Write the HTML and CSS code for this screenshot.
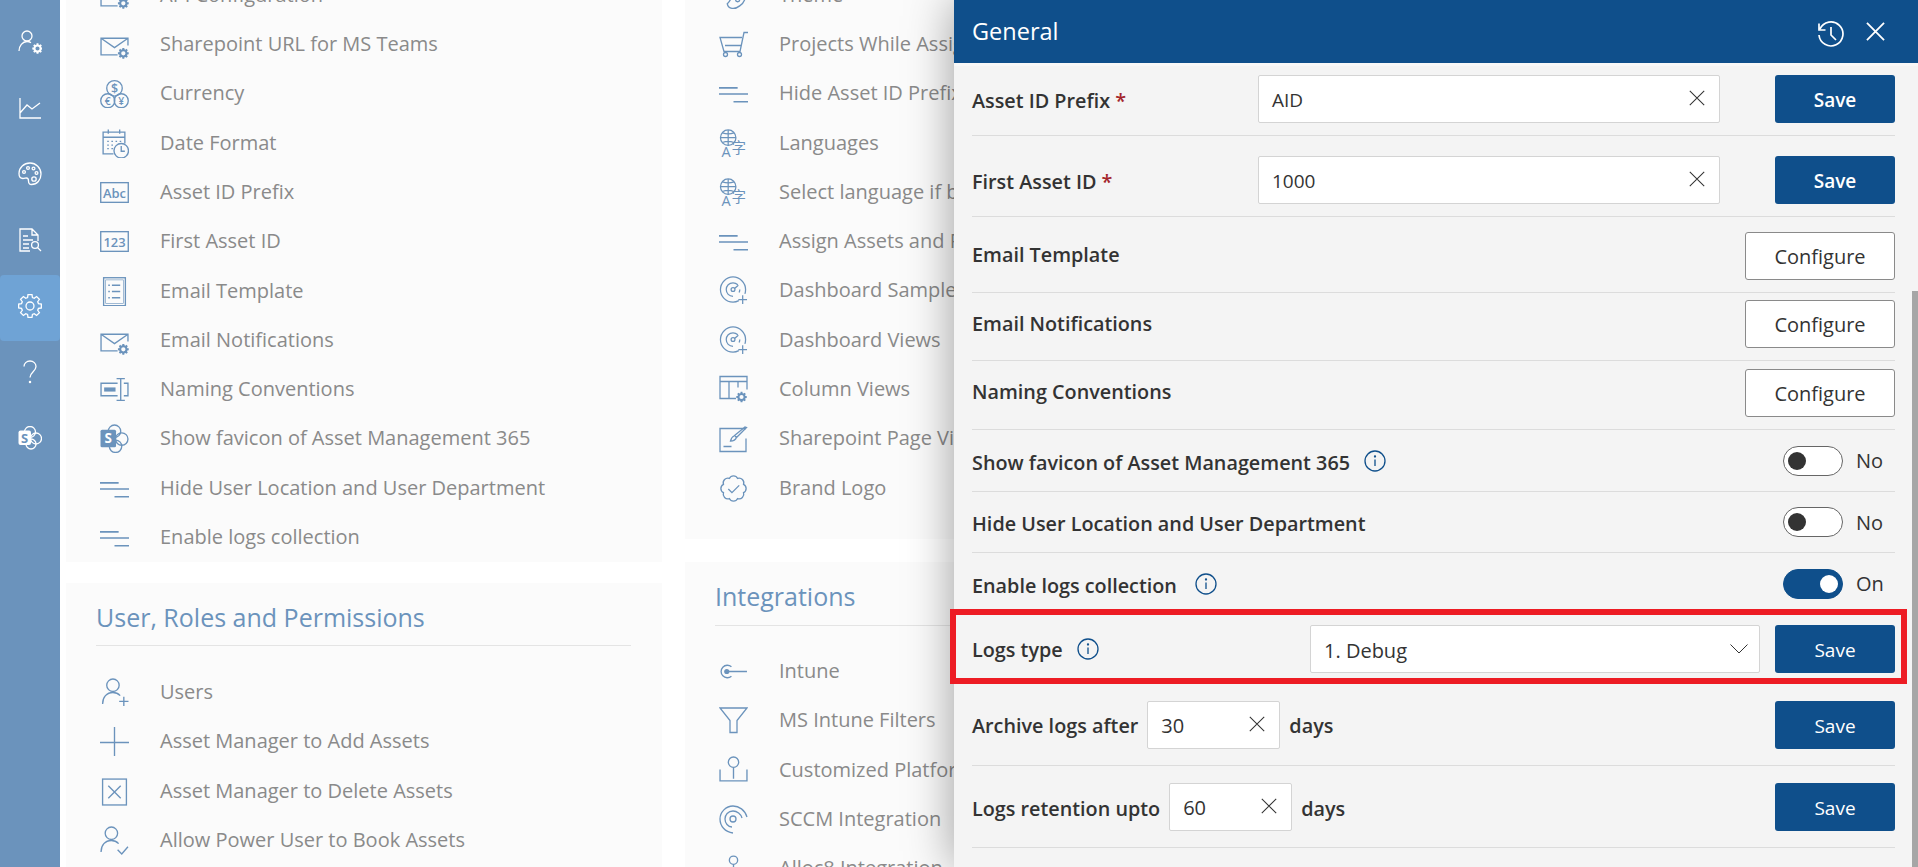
FILE: index.html
```html
<!DOCTYPE html>
<html lang="en">
<head>
<meta charset="utf-8">
<title>General settings</title>
<link rel="stylesheet" href="styles.css">
</head>
<body>
<svg class="defs" width="0" height="0" aria-hidden="true">
  <defs>
    <path id="gp" d="M23.33 14l-2.87.43-.76 1.84 1.72 2.33-2.82 2.82-2.33-1.72-1.84.76-.43 2.87h-4l-.43-2.87-1.84-.76-2.33 1.72-2.82-2.82 1.72-2.33-.76-1.84L.67 14v-4l2.87-.43.76-1.84L2.58 5.4 5.4 2.58 7.73 4.3l1.84-.76L10 .67h4l.43 2.87 1.84.76 2.33-1.72 2.82 2.82-1.72 2.33.76 1.84 2.87.43z"/>
    <path id="sgear" fill="currentColor" stroke="none" fill-rule="evenodd" transform="scale(.46)" d="M23.33 14l-2.87.43-.76 1.84 1.72 2.33-2.82 2.82-2.33-1.72-1.84.76-.43 2.87h-4l-.43-2.87-1.84-.76-2.33 1.72-2.82-2.82 1.72-2.33-.76-1.84L.67 14v-4l2.87-.43.76-1.84L2.58 5.4 5.4 2.58 7.73 4.3l1.84-.76L10 .67h4l.43 2.87 1.84.76 2.33-1.72 2.82 2.82-1.72 2.33.76 1.84 2.87.43zM12 7.500a4.500 4.500 0 1 0 0 9 4.500 4.500 0 0 0 0-9z"/>
    <symbol id="i-usergear" viewBox="0 0 24 24"><circle cx="9" cy="6" r="5"/><path d="M1 21c0-5 3.500-9.500 8-9.500 1.500 0 3 .5 4 1.200"/><use href="#sgear" x="14" y="13"/></symbol>
    <symbol id="i-chart" viewBox="0 0 24 24"><path d="M2 2v20h21M2 17l7-8 5 4 8-6"/></symbol>
    <symbol id="i-palette" viewBox="0 0 24 24"><path d="M12 1C6 1 1 5.500 1 11.500c0 3 1.500 5 4 5 1.500 0 2.500-.5 3.500-.5 2 0 2 1.500 2 3 0 2 1 3.500 3 3.500 5.500 0 9.500-4.500 9.500-10.500C23 6 18 1 12 1z"/><circle cx="6" cy="10" r="1.400"/><circle cx="10" cy="6" r="1.400"/><circle cx="15.500" cy="6.500" r="1.400"/><circle cx="18.500" cy="11" r="1.400"/><circle cx="16" cy="17" r="2.200"/></symbol>
    <symbol id="i-report" viewBox="0 0 24 24"><path d="M12 23H2V1h12l6 6v6M14 1v6h6M5 8h5M5 12h10M5 16h6M5 20h6"/><circle cx="17" cy="17" r="3.400"/><path d="M19.500 19.500L23 23"/></symbol>
    <symbol id="i-gear" viewBox="0 0 24 24"><use href="#gp"/><circle cx="12" cy="12" r="4"/></symbol>
    <symbol id="i-help" viewBox="0 0 24 24"><path d="M6 6.500C6 3.500 8.500 1 12 1s6 2.500 6 5.500c0 5-6 5.500-6 11"/><circle cx="12" cy="22" r=".6"/></symbol>
    <symbol id="i-share" viewBox="0 0 24 24"><circle cx="12" cy="6" r="5.500"/><circle cx="18" cy="12.500" r="5.500"/><circle cx="13" cy="18" r="5"/><rect class="solid" x="0.500" y="4.500" width="12.500" height="14.500" rx="2"/><text class="sletter" x="6.700" y="16.500">S</text></symbol>
    <symbol id="i-rectgear" viewBox="0 0 28 28"><path d="M17 24H1V8h26v7"/><use href="#sgear" x="17" y="16"/></symbol>
    <symbol id="i-mailgear" viewBox="0 0 28 28"><path d="M17 24H1V8h26v7M1 8l13 9 13-9"/><use href="#sgear" x="17" y="17"/></symbol>
    <symbol id="i-currency" viewBox="0 0 28 28"><circle cx="14" cy="9" r="7.500"/><circle cx="7.500" cy="21" r="6.800"/><circle cx="20.500" cy="21" r="6.800"/><text class="glyph" x="14" y="13.500">$</text><text class="glyph small" x="7.500" y="25">€</text><text class="glyph small" x="20.500" y="25">¥</text></symbol>
    <symbol id="i-date" viewBox="0 0 28 28"><path d="M13 24H3V3h21v11M3 8h21M8 .5v4M19 .5v4M7 12h1.500M11 12h1.500M15 12h1.500M19 12h1.500M7 15.500h1.500M11 15.500h1.500M7 19h1.500M11 19h1.500"/><circle cx="20.500" cy="21" r="7"/><path d="M20.500 16.500V21.500h3.500"/></symbol>
    <symbol id="i-abc" viewBox="0 0 28 28"><rect x=".7" y="4.500" width="26.600" height="19"/><text class="boxed" x="14" y="19">Abc</text></symbol>
    <symbol id="i-123" viewBox="0 0 28 28"><rect x=".7" y="4.500" width="26.600" height="19"/><text class="boxed" x="14" y="19">123</text></symbol>
    <symbol id="i-doc" viewBox="0 0 28 28"><rect x="3.500" y=".7" width="21" height="27"/><rect x="5.500" y="2.800" width="17" height="22.800" stroke-width=".6"/><path d="M8 8h1.500M11.500 8h8M8 14h1.500M11.500 14h8M8 20h1.500M11.500 20h8"/></symbol>
    <symbol id="i-naming" viewBox="0 0 28 28"><path d="M17 8H1v12h16M23 8h4v12h-4M16 3.500h8M16 24.500h8M20 3.500v21"/><rect class="solid" x="4" y="12" width="11" height="4"/></symbol>
    <symbol id="i-sp" viewBox="0 0 28 28"><circle cx="14" cy="7" r="6"/><circle cx="21" cy="14.500" r="6"/><circle cx="15" cy="21.500" r="6"/><rect class="solid" x=".5" y="5.500" width="15" height="17" rx="1.500"/><text class="sletter" x="8" y="18.500">S</text></symbol>
    <symbol id="i-lines" viewBox="0 0 28 28"><path d="M0 8.500h18M0 14.500h28M14 22h14" stroke-width="1.600"/></symbol>
    <symbol id="i-userplus" viewBox="0 0 28 28"><circle cx="12.500" cy="7" r="6"/><path d="M2.500 25c0-6.500 4-11 10-11 3 0 5 1 7 3M23 18v9M18.500 22.500h9"/></symbol>
    <symbol id="i-plus" viewBox="0 0 28 28"><path d="M14 0v30M0 15h28"/></symbol>
    <symbol id="i-xbox" viewBox="0 0 28 28"><rect x="2.500" y="2" width="23" height="25"/><path d="M8 8.500l12 12M20 8.500L8 20.500"/></symbol>
    <symbol id="i-usercheck" viewBox="0 0 28 28"><circle cx="11" cy="7" r="6"/><path d="M1 25c0-6.500 4-11 10-11 3 0 5 1 7 3M17 23l4 4 6-7"/></symbol>
    <symbol id="i-cart" viewBox="0 0 29 28"><path d="M29 2h-4l-4 19H5L1 7h22M6 15h16"/><circle cx="6.500" cy="24" r="2"/><circle cx="20.500" cy="24" r="2"/></symbol>
    <symbol id="i-lang" viewBox="0 0 29 30"><circle cx="9" cy="9" r="8"/><path d="M1 9h16M9 1v16M3 4c4 1.500 8 1.500 12 0M3 14c4-1.500 8-1.500 12 0"/><text class="langa" x="2" y="29">A</text><text class="langz" x="20" y="25">字</text></symbol>
    <symbol id="i-gauge" viewBox="0 0 29 30"><path d="M20 25.500c-1.800.9-3.500 1.500-6 1.500C6.500 27 1 21 1 14 1 7 7 1 14 1s13 6 13 13c0 1.500-.2 3-.7 4.500"/><path d="M14 21c-4 0-7-3-7-7s3-7 7-7c2 0 3.500.7 5 2M21 14c0 1-.2 2-.7 3"/><circle cx="14" cy="14" r="2"/><path d="M15.500 13l4-3.500M24 20v9M19.500 24.500h9"/></symbol>
    <symbol id="i-table" viewBox="0 0 29 28"><path d="M17 23H1V1h27v13M1 6h27M10 6v17M19 6v6"/><use href="#sgear" x="17" y="16"/></symbol>
    <symbol id="i-brush" viewBox="0 0 29 28"><path d="M27 4H1v23h26V14M4.500 22h8"/><path d="M27.500 3l-10 10-2-2L26 2.500zM15 11.500c-2.500 1-3 3-3.500 5 2.500 0 5-1 6-3.500"/></symbol>
    <symbol id="i-badge" viewBox="0 0 28 28"><path d="M23.700 9.980A4.500 4.500 0 0 1 23.700 18.020 4.500 4.500 0 0 1 18.020 23.700 4.500 4.500 0 0 1 9.980 23.700 4.500 4.500 0 0 1 4.300 18.020 4.500 4.500 0 0 1 4.300 9.980 4.500 4.500 0 0 1 9.980 4.300 4.500 4.500 0 0 1 18.020 4.300 4.500 4.500 0 0 1 23.700 9.980z"/><path d="M9 14.500l3.500 3.500 7-7"/></symbol>
    <symbol id="i-theme" viewBox="0 0 28 28"><path d="M12 14c0 4-2 6-4 8 1 5 7 6 12 2 5-3 7-10 5-16"/><circle cx="18" cy="18" r="2"/></symbol>
    <symbol id="i-intune" viewBox="0 0 28 28"><path d="M12 9.500a6 6 0 1 0 0 9M7 14h20"/><circle cx="7.500" cy="14" r="2.500" class="solid"/></symbol>
    <symbol id="i-filter" viewBox="0 0 29 28"><path d="M1 1.500h27L18 14v12h-7V14z"/></symbol>
    <symbol id="i-pin" viewBox="0 0 28 28"><circle cx="14" cy="6" r="5"/><path d="M14 11v11M1 13v11h26V13"/></symbol>
    <symbol id="i-sccm" viewBox="0 0 29 29"><path d="M28 12C26 5 20 1 14 1 7 1 1 7 1 14s5 13 13 14"/><path d="M23 13c-1-4-5-7-9-7-5 0-8 4-8 8s3 8 7 8"/><circle cx="14" cy="14" r="3"/></symbol>
    <symbol id="i-alloc" viewBox="0 0 28 28"><circle cx="14" cy="6" r="4"/><path d="M14 10v12"/></symbol>
    <symbol id="i-history" viewBox="0 0 28 28"><path d="M3 9a12 12 0 1 1-1 6M2 3.500V10h6.500M14 7v8l5 5"/></symbol>
    <symbol id="i-close" viewBox="0 0 20 20"><path d="M1 1l18 18M19 1L1 19"/></symbol>
    <symbol id="i-info" viewBox="0 0 22 22"><circle cx="11" cy="11" r="10"/><path d="M11 9.500V16"/><circle cx="11" cy="6.500" r=".5"/></symbol>
    <symbol id="i-chevron" viewBox="0 0 18 10"><path d="M.5 .5L9 9 17.500 .5"/></symbol>
  </defs>
</svg>

<div class="app">
  <nav class="rail">
    <a class="rail-item"><svg class="rail-icon"><use href="#i-usergear"/></svg></a>
    <a class="rail-item"><svg class="rail-icon"><use href="#i-chart"/></svg></a>
    <a class="rail-item"><svg class="rail-icon"><use href="#i-palette"/></svg></a>
    <a class="rail-item"><svg class="rail-icon"><use href="#i-report"/></svg></a>
    <a class="rail-item active"><svg class="rail-icon"><use href="#i-gear"/></svg></a>
    <a class="rail-item"><svg class="rail-icon"><use href="#i-help"/></svg></a>
    <a class="rail-item"><svg class="rail-icon"><use href="#i-share"/></svg></a>
  </nav>

  <main class="board">
    <div class="col col-left">
      <section class="card card-general-left">
        <ul class="list">
          <li class="item"><svg class="ico"><use href="#i-rectgear"/></svg>API Configuration</li>
          <li class="item"><svg class="ico"><use href="#i-mailgear"/></svg>Sharepoint URL for MS Teams</li>
          <li class="item"><svg class="ico"><use href="#i-currency"/></svg>Currency</li>
          <li class="item"><svg class="ico"><use href="#i-date"/></svg>Date Format</li>
          <li class="item"><svg class="ico"><use href="#i-abc"/></svg>Asset ID Prefix</li>
          <li class="item"><svg class="ico"><use href="#i-123"/></svg>First Asset ID</li>
          <li class="item"><svg class="ico"><use href="#i-doc"/></svg>Email Template</li>
          <li class="item"><svg class="ico"><use href="#i-mailgear"/></svg>Email Notifications</li>
          <li class="item"><svg class="ico"><use href="#i-naming"/></svg>Naming Conventions</li>
          <li class="item"><svg class="ico"><use href="#i-sp"/></svg>Show favicon of Asset Management 365</li>
          <li class="item"><svg class="ico"><use href="#i-lines"/></svg>Hide User Location and User Department</li>
          <li class="item"><svg class="ico"><use href="#i-lines"/></svg>Enable logs collection</li>
        </ul>
      </section>
      <section class="card card-users">
        <h2 class="card-title">User, Roles and Permissions</h2>
        <ul class="list">
          <li class="item"><svg class="ico"><use href="#i-userplus"/></svg>Users</li>
          <li class="item"><svg class="ico"><use href="#i-plus"/></svg>Asset Manager to Add Assets</li>
          <li class="item"><svg class="ico"><use href="#i-xbox"/></svg>Asset Manager to Delete Assets</li>
          <li class="item"><svg class="ico"><use href="#i-usercheck"/></svg>Allow Power User to Book Assets</li>
        </ul>
      </section>
    </div>

    <div class="col col-mid">
      <section class="card card-general-mid">
        <ul class="list">
          <li class="item"><svg class="ico"><use href="#i-theme"/></svg>Theme</li>
          <li class="item"><svg class="ico"><use href="#i-cart"/></svg>Projects While Assigning</li>
          <li class="item"><svg class="ico"><use href="#i-lines"/></svg>Hide Asset ID Prefix</li>
          <li class="item"><svg class="ico"><use href="#i-lang"/></svg>Languages</li>
          <li class="item"><svg class="ico"><use href="#i-lang"/></svg>Select language if browser</li>
          <li class="item"><svg class="ico"><use href="#i-lines"/></svg>Assign Assets and Requests</li>
          <li class="item"><svg class="ico"><use href="#i-gauge"/></svg>Dashboard Samples</li>
          <li class="item"><svg class="ico"><use href="#i-gauge"/></svg>Dashboard Views</li>
          <li class="item"><svg class="ico"><use href="#i-table"/></svg>Column Views</li>
          <li class="item"><svg class="ico"><use href="#i-brush"/></svg>Sharepoint Page Views</li>
          <li class="item"><svg class="ico"><use href="#i-badge"/></svg>Brand Logo</li>
        </ul>
      </section>
      <section class="card card-integrations">
        <h2 class="card-title">Integrations</h2>
        <ul class="list">
          <li class="item"><svg class="ico"><use href="#i-intune"/></svg>Intune</li>
          <li class="item"><svg class="ico"><use href="#i-filter"/></svg>MS Intune Filters</li>
          <li class="item"><svg class="ico"><use href="#i-pin"/></svg>Customized Platforms</li>
          <li class="item"><svg class="ico"><use href="#i-sccm"/></svg>SCCM Integration</li>
          <li class="item"><svg class="ico"><use href="#i-alloc"/></svg>Alloc8 Integration</li>
        </ul>
      </section>
    </div>
  </main>

  <aside class="panel">
    <header class="panel-head">
      <span class="panel-title">General</span>
      <svg class="head-history"><use href="#i-history"/></svg>
      <svg class="head-close"><use href="#i-close"/></svg>
    </header>
    <div class="rows">
      <div class="row">
        <span class="label lab-dn1">Asset ID Prefix <b class="req">*</b></span>
        <div class="field field-wide"><span class="value">AID</span><svg class="clear"><use href="#i-close"/></svg></div>
        <button class="btn save strong">Save</button>
      </div>
      <div class="row row-pt8">
        <span class="label lab-dn1">First Asset ID <b class="req">*</b></span>
        <div class="field field-wide"><span class="value">1000</span><svg class="clear"><use href="#i-close"/></svg></div>
        <button class="btn save strong">Save</button>
      </div>
      <div class="row row-pt3">
        <span class="label lab-up2">Email Template</span>
        <button class="btn configure">Configure</button>
      </div>
      <div class="row row-pb5">
        <span class="label lab-up1">Email Notifications</span>
        <button class="btn configure">Configure</button>
      </div>
      <div class="row row-pb4">
        <span class="label lab-up2">Naming Conventions</span>
        <button class="btn configure">Configure</button>
      </div>
      <div class="row">
        <span class="label lab-dn2">Show favicon of Asset Management 365</span>
        <svg class="info"><use href="#i-info"/></svg>
        <div class="switch-wrap"><span class="switch"></span><span class="state">No</span></div>
      </div>
      <div class="row">
        <span class="label lab-dn1">Hide User Location and User Department</span>
        <div class="switch-wrap"><span class="switch"></span><span class="state">No</span></div>
      </div>
      <div class="row">
        <span class="label lab-dn2">Enable logs collection</span>
        <svg class="info info-wide"><use href="#i-info"/></svg>
        <div class="switch-wrap"><span class="switch on"></span><span class="state">On</span></div>
      </div>
      <div class="row">
        <span class="label">Logs type</span>
        <svg class="info"><use href="#i-info"/></svg>
        <div class="field field-select"><span class="value">1. Debug</span><svg class="chevron"><use href="#i-chevron"/></svg></div>
        <button class="btn save">Save</button>
      </div>
      <div class="row">
        <span class="label lab-dn1">Archive logs after</span>
        <div class="field field-small"><span class="value">30</span><svg class="clear"><use href="#i-close"/></svg></div>
        <span class="label lab-dn1 unit">days</span>
        <button class="btn save">Save</button>
      </div>
      <div class="row">
        <span class="label lab-dn2">Logs retention upto</span>
        <div class="field field-small field-small-b"><span class="value">60</span><svg class="clear"><use href="#i-close"/></svg></div>
        <span class="label lab-dn2 unit">days</span>
        <button class="btn save">Save</button>
      </div>
    </div>
    <div class="scroll-thumb"></div>
    <div class="callout"></div>
  </aside>
</div>
</body>
</html>
```

FILE: styles.css
```css
* { box-sizing: border-box; }
html, body { margin: 0; height: 100%; overflow: hidden; background: #fff; }
body { font-family: "Open Sans", "Liberation Sans", sans-serif; }
.defs { position: absolute; }
svg { fill: none; stroke: currentColor; stroke-width: 1.3; overflow: visible; }
svg .solid { fill: currentColor; stroke: none; }
svg text { stroke: none; fill: currentColor; font-family: "Open Sans", sans-serif; text-anchor: middle; }
svg .glyph { font-size: 12px; font-weight: 600; }
svg .glyph.small { font-size: 10px; }
svg .boxed { font-size: 12.500px; font-weight: 600; }
svg .sletter { fill: var(--letter, #fff); font-size: 13px; font-weight: 700; }
svg .langa { font-size: 15px; text-anchor: start; }
svg .langz { font-size: 15px; font-family: "Noto Sans CJK SC", sans-serif; }

.app { display: flex; height: 867px; position: relative; overflow: hidden; }

.rail { --letter: #6b93bc; width: 60px; flex: none; background: #6b93bc; color: #fff; padding-top: 11px; }
.rail-item { display: flex; align-items: center; justify-content: center; height: 66px; padding-bottom: 5px; border-radius: 4px; }
.rail-item.active { background: #6fa3d5; }
.rail-icon { width: 24px; height: 24px; }

.board { display: grid; grid-template-columns: 596px 269px; column-gap: 23px; margin-left: 6px; align-items: start; }
.col { display: flex; flex-direction: column; min-width: 0; overflow: hidden; }
.col-left { margin-top: -30.400px; gap: 21px; }
.col-mid { margin-top: -30.500px; gap: 23px; }

.card { background: #fbfbfb; }
.card-general-left { height: 592.400px; padding: 0 31px 0 30px; }
.card-users { padding: 18px 31px 0 30px; height: 400px; }
.card-general-mid { padding: 0 0 0 30px; height: 569.500px; }
.card-integrations { padding: 18px 0 0 30px; height: 400px; }
.card-title { margin: 0 0 21px; padding-bottom: 12px; height: 45px; border-bottom: 1px solid #e4e4e4; font-size: 25px; line-height: 32px; font-weight: 400; color: #6b93bc; white-space: nowrap; }
.card-integrations .card-title { height: 46px; margin-bottom: 20px; }

.list { list-style: none; margin: 0; padding: 0; }
.item { display: flex; align-items: center; height: 49.300px; padding-left: 4px; gap: 31px; font-size: 20px; color: #8a8a8a; white-space: nowrap; }
.ico { flex: none; width: 29px; height: 29px; color: #6b93bc; transform: translateY(1px); }

.panel { position: absolute; top: 0; bottom: 0; left: 954px; right: 0; background: #f4f4f4; box-shadow: 0 0 45px rgba(0, 0, 0, .38); }
.panel-head { display: flex; align-items: center; height: 63px; padding: 0 33px 0 18px; background: #0f4f8b; color: #fff; }
.panel-title { font-size: 23.500px; margin: 0 auto 2px 0; }
.head-history { width: 28px; height: 28px; margin: 5px 21px 0 0; stroke-width: 1.700; }
.head-close { width: 19px; height: 19px; stroke-width: 1.900; }

.rows { display: grid; grid-template-rows: 73px 81px 76px 68px 69px 62px 61px 62px 69px 82px 82px; padding: 0 23px 0 18px; background: linear-gradient(#f8f8f8 3px, transparent 3px); }
.row { display: flex; align-items: center; border-bottom: 1px solid #dcdcdc; }
.row-pt8 { padding-top: 8px; }
.row-pt3 { padding-top: 3px; }
.row-pb5 { padding-bottom: 5px; }
.row-pb4 { padding-bottom: 4px; }

.label { font-size: 19.800px; font-weight: 600; color: #333; white-space: nowrap; }
.lab-dn1 { margin-top: 2px; }
.lab-dn2 { margin-top: 4px; }
.lab-up1 { margin-bottom: 2px; }
.lab-up2 { margin-bottom: 4px; }
.req { color: #a4262c; font-weight: 600; }
.unit { margin-left: 9px; }
.info { flex: none; width: 22px; height: 22px; margin: 0 0 0 14px; color: #0f4f8b; stroke-width: 1.300; }
.info-wide { margin-left: 18px; }

.field { display: flex; align-items: center; height: 48px; padding: 0 14px 0 13px; background: #fff; border: 1px solid #d4d4d4; border-radius: 2px; font-size: 20px; color: #333; }
.value { flex: 1; padding-top: 2px; }
.field-wide { width: 462px; margin: -1px 55px 0 auto; font-size: 19px; }
.field-select { width: 450px; margin: 0 15px 0 auto; padding-right: 11px; }
.field-small { width: 133px; margin-left: 9px; }
.field-small-b { width: 123px; }
.clear { width: 16px; height: 16px; margin-top: -2px; color: #333; stroke-width: 1.300; }
.chevron { width: 18px; height: 10px; color: #333; stroke-width: 1; }

.btn { flex: none; height: 48px; border-radius: 3px; font-family: inherit; font-size: 19px; padding: 0; }
.save { width: 120px; margin-left: auto; padding-top: 2px; background: #0f4f8b; border: 0; color: #fff; }
.field + .save { margin-left: 0; }
.strong { font-weight: 600; }
.configure { width: 150px; margin-left: auto; background: #fff; border: 1px solid #8a8a8a; color: #333; font-size: 20px; font-weight: 500; }

.switch-wrap { display: flex; align-items: center; gap: 13px; margin-left: auto; }
.switch { position: relative; width: 60px; height: 30px; border: 1px solid #666; border-radius: 15px; background: #fff; }
.switch::after { content: ""; position: absolute; left: 4px; top: 5px; width: 18px; height: 18px; border-radius: 50%; background: #333; }
.switch.on { background: #0f4f8b; border-color: #0f4f8b; }
.switch.on::after { left: 36px; background: #fff; }
.state { width: 39px; font-size: 20px; color: #333; }

.scroll-thumb { position: absolute; right: 0; top: 291px; bottom: 0; width: 6px; background: #a6a6a6; }
.callout { position: absolute; left: -4px; top: 609px; width: 957px; height: 75px; border: 6px solid #ed1c24; }
```
